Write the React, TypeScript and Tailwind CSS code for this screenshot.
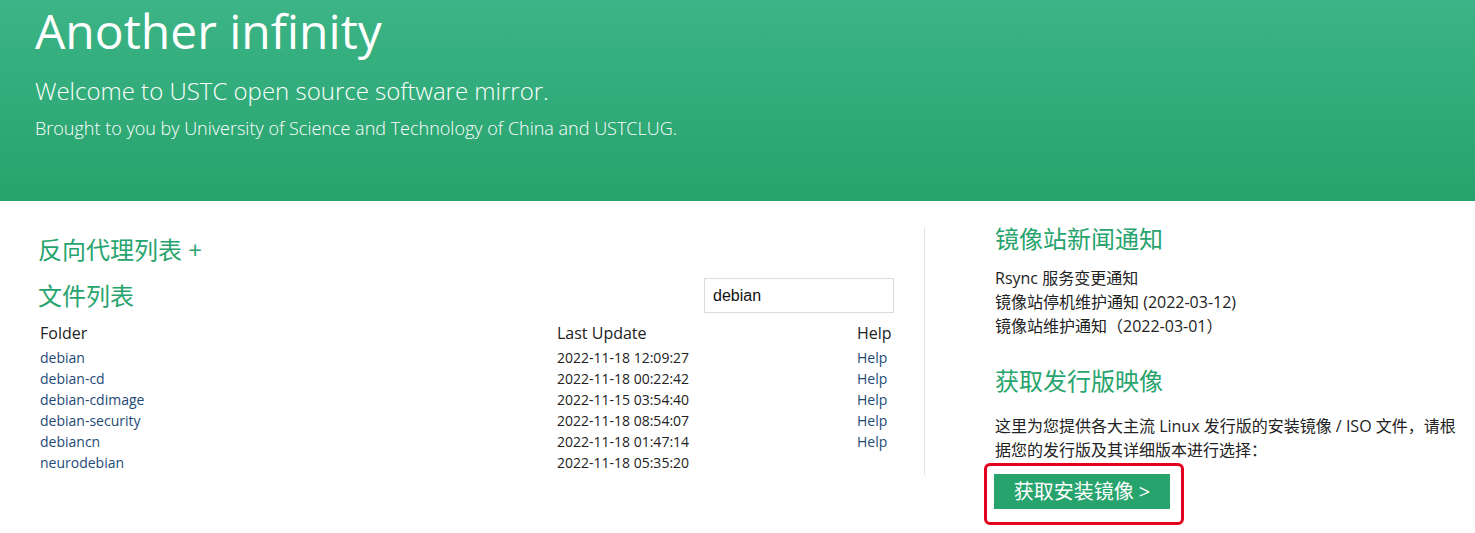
import React from "react";

const folders = [
  { name: "debian", time: "2022-11-18 12:09:27", help: true },
  { name: "debian-cd", time: "2022-11-18 00:22:42", help: true },
  { name: "debian-cdimage", time: "2022-11-15 03:54:40", help: true },
  { name: "debian-security", time: "2022-11-18 08:54:07", help: true },
  { name: "debiancn", time: "2022-11-18 01:47:14", help: true },
  { name: "neurodebian", time: "2022-11-18 05:35:20", help: false },
];

const news = [
  "Rsync 服务变更通知",
  "镜像站停机维护通知 (2022-03-12)",
  "镜像站维护通知（2022-03-01）",
];

export default function App() {
  return (
    <div className="min-h-screen bg-white font-['Open_Sans','Noto_Sans_CJK_SC',sans-serif] text-[#222]">
      <header className="h-[201px] bg-gradient-to-b from-[#3cb487] to-[#26a36b] pl-[35px] pt-[7px] text-white">
        <h1 className="text-[48px] leading-none">Another infinity</h1>
        <p className="mt-[24px] text-[24px] font-light leading-none">
          Welcome to USTC open source software mirror.
        </p>
        <p className="mt-[16px] text-[18px] font-light leading-none">
          Brought to you by University of Science and Technology of China and USTCLUG.
        </p>
      </header>

      <main className="flex items-start pl-[38px] pt-[26px]">
        <section className="w-[887px] border-r border-[#e6e6e6] pb-[2px] pr-[30px]">
          <h2 className="mt-[6px] text-[24px] leading-[34px] text-[#27a46d]">反向代理列表 +</h2>
          <div className="mt-[11px] flex items-center justify-between">
            <h2 className="text-[24px] leading-[34px] text-[#27a46d]">文件列表</h2>
            <input
              defaultValue="debian"
              className="h-[35px] w-[190px] border border-[#dcdcdc] px-[8px] font-['Liberation_Sans',sans-serif] text-[16px] text-[#111] outline-none"
            />
          </div>
          <div className="mt-[5px] pl-[2px]">
            <div className="grid h-[29px] grid-cols-[517px_300px_1fr] items-center text-[16px]">
              <span>Folder</span>
              <span>Last Update</span>
              <span>Help</span>
            </div>
            {folders.map((f) => (
              <div
                key={f.name}
                className="grid h-[21px] grid-cols-[517px_300px_1fr] items-center text-[14px]"
              >
                <a className="text-[#1e4a76]">{f.name}</a>
                <span>{f.time}</span>
                {f.help ? <a className="text-[#1e4a76]">Help</a> : <span />}
              </div>
            ))}
          </div>
        </section>

        <aside className="flex-1 pl-[70px] pr-[14px]">
          <h2 className="text-[24px] leading-[24px] text-[#27a46d]">镜像站新闻通知</h2>
          <ul className="mt-[15px] text-[16px] leading-[24px]">
            {news.map((n) => (
              <li key={n}>{n}</li>
            ))}
          </ul>
          <h2 className="mt-[31px] text-[24px] leading-[24px] text-[#27a46d]">获取发行版映像</h2>
          <p className="mt-[21px] text-[16px] leading-[24px]">
            这里为您提供各大主流 Linux 发行版的安装镜像 / ISO 文件，请根据您的发行版及其详细版本进行选择：
          </p>
          <div className="ml-[-11px] mt-px inline-block rounded-[6px] border-[3px] border-[#e6001e] pb-[13px] pl-[7px] pr-[11px] pt-[8px]">
            <button className="flex h-[35px] w-[176px] items-center justify-center bg-[#27a46d] text-[20px] text-white">
              获取安装镜像 &gt;
            </button>
          </div>
        </aside>
      </main>
    </div>
  );
}
